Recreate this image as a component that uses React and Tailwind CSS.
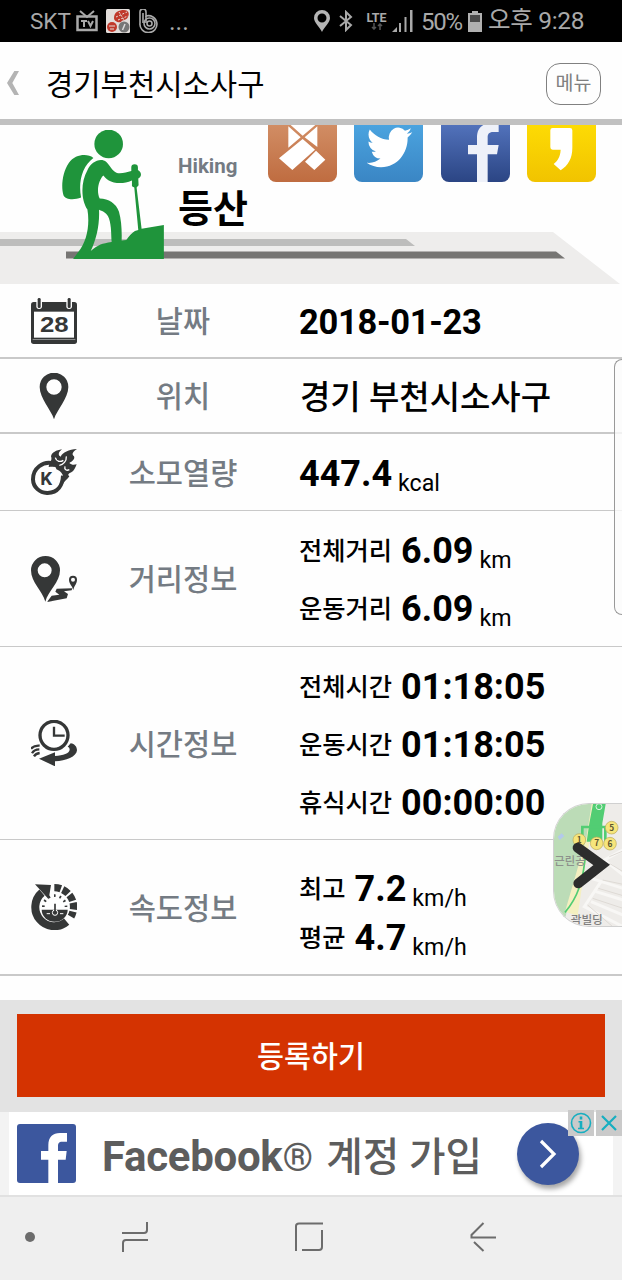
import React from 'react';

// Ikon-ikon di kolom kiri tabel
const CalendarIcon = () => (
  <svg viewBox="93 39 138 138" className="w-[46px] h-[46px]">
    <rect x="93" y="51" width="138" height="126" rx="8" fill="#353737" />
    <rect x="102" y="80" width="120" height="78" fill="#fff" />
    <rect x="98" y="162" width="128" height="3" fill="#8b8d8d" />
    <rect x="109" y="36" width="17" height="36" rx="8" fill="#fff" />
    <rect x="199" y="36" width="17" height="36" rx="8" fill="#fff" />
    <rect x="113" y="39" width="9" height="30" rx="4" fill="#353737" />
    <rect x="203" y="39" width="9" height="30" rx="4" fill="#353737" />
    <text
      x="120"
      y="141"
      fontSize="67"
      textLength="86"
      lengthAdjust="spacingAndGlyphs"
      fill="#353737"
      className="font-bold [font-family:'Liberation_Sans',sans-serif]"
    >
      28
    </text>
  </svg>
);

const PinIcon = () => (
  <svg viewBox="91 262 138 138" className="w-[46px] h-[46px]">
    <path
      fillRule="evenodd"
      fill="#353737"
      d="M160 401C153 375 117 338 117 304A43 43 0 0 1 203 304C203 338 167 375 160 401ZM160 281A23 23 0 1 0 160 327A23 23 0 1 0 160 281Z"
    />
  </svg>
);

const CalorieIcon = () => (
  <svg viewBox="93 492 138 138" className="w-[46px] h-[46px]">
    <path
      d="M154 534C130 530 99 548 99 583A43 42 0 0 0 143 624C174 623 188 600 189 572"
      fill="none"
      stroke="#353737"
      strokeWidth="12"
    />
    <path
      fill="#353737"
      d="M146 546C148 530 158 528 153 514C156 502 168 496 186 493C174 502 174 512 182 515C188 502 206 494 231 492C218 500 214 508 222 514C226 522 216 530 208 534C214 540 222 540 230 538C226 548 222 558 214 562C204 566 202 570 208 574C202 584 196 584 190 596C196 574 184 558 168 552C172 546 160 544 146 546Z"
    />
    <path
      d="M166 518C169 530 181 532 190 526M199 514C200 528 190 540 178 541M195 544C192 554 200 558 208 554"
      fill="none"
      stroke="#fff"
      strokeWidth="4"
    />
    <text x="121" y="600" fontSize="56" fill="#353737" className="font-bold [font-family:Roboto,sans-serif]">
      K
    </text>
  </svg>
);

const DistanceIcon = () => (
  <svg viewBox="93 45 138 138" className="w-[46px] h-[46px]">
    <g fill="#353737" fillRule="evenodd">
      <path d="M136 182C128 150 93 125 93 88A43.500 43 0 0 1 180 88C180 125 144 150 136 182ZM134 67A21 21 0 1 0 134 109A21 21 0 1 0 134 67Z" />
      <path d="M220 147C217 135 207 128 207 116A12 12 0 0 1 231 116C231 128 222 135 220 147ZM219 110A6 6 0 1 0 219 122A6 6 0 1 0 219 110Z" />
      <path d="M141 183L155 164L178 161L166 152L170 143L217 142L215 148L192 151L204 159L200 172Z" />
    </g>
  </svg>
);

const TimeIcon = () => (
  <svg viewBox="93 540 138 138" className="w-[46px] h-[46px]">
    <circle cx="162" cy="586" r="42" fill="none" stroke="#353737" strokeWidth="10" />
    <path d="M162 560V587H194" fill="none" stroke="#353737" strokeWidth="7" />
    <path
      fill="#353737"
      d="M212 610C224 612 231 620 231 631C230 650 198 663 165 664V679L117 656L165 637V648C190 646 208 640 209 629C209 624 207 621 203 620Z"
    />
    <path
      d="M119 617C108 616 98 620 93 626M118 628C108 628 100 632 96 640M119 639C112 640 106 642 102 649"
      fill="none"
      stroke="#353737"
      strokeWidth="7"
    />
  </svg>
);

const SpeedIcon = () => (
  <svg viewBox="93 101 138 138" className="w-[46px] h-[46px]">
    <path d="M126 127A57 57 0 0 0 200 214" fill="none" stroke="#353737" strokeWidth="24" />
    <path d="M105 102L153 104L146 147Z" fill="#353737" />
    <path
      d="M163 112A58 58 0 0 1 213 199"
      fill="none"
      stroke="#353737"
      strokeWidth="22"
      strokeDasharray="20 6"
    />
    <path d="M125 178H203A39 36 0 0 1 125 178Z" fill="#353737" />
    <path d="M130 170A34 34 0 0 1 198 170" fill="none" stroke="#353737" strokeWidth="8" strokeDasharray="5 12" />
    <circle cx="165" cy="187" r="8" fill="#353737" stroke="#fff" strokeWidth="3" />
    <path d="M165 160V190" stroke="#353737" strokeWidth="5" />
    <path d="M140 190H150M180 190H190" stroke="#fff" strokeWidth="3" />
  </svg>
);

const rows = [
  { label: '날짜', icon: CalendarIcon, height: 'h-[75px] border-b-2', values: [{ date: '2018-01-23' }] },
  { label: '위치', icon: PinIcon, height: 'h-[75px] border-b-2', values: [{ place: '경기 부천시소사구' }] },
  { label: '소모열량', icon: CalorieIcon, height: 'h-[77px] border-b', values: [{ value: '447.4', unit: 'kcal' }] },
  {
    label: '거리정보',
    icon: DistanceIcon,
    height: 'h-[136px] border-b',
    values: [
      { name: '전체거리', value: '6.09', unit: 'km' },
      { name: '운동거리', value: '6.09', unit: 'km' },
    ],
  },
  {
    label: '시간정보',
    icon: TimeIcon,
    height: 'h-[193px] border-b',
    values: [
      { name: '전체시간', value: '01:18:05' },
      { name: '운동시간', value: '01:18:05' },
      { name: '휴식시간', value: '00:00:00' },
    ],
  },
  {
    label: '속도정보',
    icon: SpeedIcon,
    height: 'h-[136px] border-b-2',
    tight: true,
    values: [
      { name: '최고', value: '7.2', unit: 'km/h' },
      { name: '평균', value: '4.7', unit: 'km/h' },
    ],
  },
];

const InfoRow = ({ row }) => {
  const Icon = row.icon;

  return (
    <div className={`grid grid-cols-[108px_150px_1fr] items-center border-[#c9c9c9] ${row.height}`}>
      <div className="flex justify-center">
        <Icon />
      </div>
      <div className="pt-[5px] text-center text-[29.5px] leading-none font-medium text-[#747b83]">{row.label}</div>
      <div className={`pl-[41px] ${row.tight ? 'pt-[13px]' : 'pt-[3px]'}`}>
        {row.values.map((item, i) => (
          <div
            key={i}
            className={`whitespace-nowrap text-[36px] font-bold text-black ${row.tight ? 'leading-[49px]' : 'leading-[58px]'}`}
          >
            {item.date && <span className="text-[34.5px] leading-none tracking-[-0.3px]">{item.date}</span>}
            {item.place && <span className="ml-px text-[33px] leading-none font-medium">{item.place}</span>}
            {item.name && (
              <span className="mr-[9px] align-[3px] text-[25.3px] leading-none font-medium">{item.name}</span>
            )}
            {item.value && <span className="leading-none">{item.value}</span>}
            {item.unit && (
              <span className="ml-[6px] align-[-5px] text-[23.2px] leading-none font-normal">{item.unit}</span>
            )}
          </div>
        ))}
      </div>
    </div>
  );
};

const StatusBar = () => (
  <div className="flex h-[42px] items-center bg-black pl-[30px] text-[#a9a9a9]">
    <span className="w-[46px] text-[22.5px] leading-none">SKT</span>
    <svg viewBox="0 0 22 22" className="w-[22px] h-[22px]">
      <path d="M4 1L11 7L18 1" fill="none" stroke="#a9a9a9" strokeWidth="2" />
      <rect x="1.500" y="6.500" width="19" height="13.500" fill="none" stroke="#a9a9a9" strokeWidth="2.500" />
      <path d="M5 11H11M8 11V17M12 11L14.500 16L17 11" fill="none" stroke="#a9a9a9" strokeWidth="2" />
    </svg>
    <svg viewBox="0 0 24 24" className="ml-2 w-6 h-6">
      <rect width="24" height="24" rx="1.500" fill="#e3dedb" />
      <path d="M8 9C8 3 13 1 18 1C22 1 24 4 22 8C20 12 17 10 15 13C12 14 8 12 8 9Z" fill="#c0392b" />
      <path d="M10 8L21 3M12 11L22 7M13 3L18 11" stroke="#e3dedb" strokeWidth="1" strokeDasharray="2 1.500" />
      <circle cx="6" cy="18" r="5" fill="#c0392b" />
      <path d="M3 17H9M4 20H8" stroke="#e3dedb" strokeWidth="1" />
      <circle cx="18" cy="18" r="5.500" fill="#777" />
      <path d="M16.500 21L19 15" stroke="#ddd" strokeWidth="1.500" />
    </svg>
    <svg viewBox="0 0 20 24" className="ml-[9px] w-5 h-6" fill="none" stroke="#a9a9a9" strokeWidth="1.600">
      <path d="M1 14V3A2.500 2.500 0 0 1 7 3V7A8.500 8.500 0 1 1 1 14Z" />
      <path d="M4 14V4M7 7V14" />
      <circle cx="10.500" cy="14.500" r="5.500" />
      <circle cx="10.500" cy="14.500" r="2.500" />
    </svg>
    <span className="ml-[10px] w-[20px] text-[25px] leading-none">...</span>

    <svg viewBox="0 0 16 22" className="ml-[125px] w-4 h-[22px]">
      <path
        fillRule="evenodd"
        fill="#b5b5b5"
        d="M8 22C6 17 0 13 0 8A8 8 0 0 1 16 8C16 13 10 17 8 22ZM8 3.500A4.500 4.500 0 1 0 8 12.500A4.500 4.500 0 1 0 8 3.500Z"
      />
    </svg>
    <svg viewBox="0 0 14 22" className="ml-[9px] w-[14px] h-[22px]" fill="none" stroke="#a9a9a9" strokeWidth="2">
      <path d="M1 6L12 15L7 20V2L12 7L1 16" />
    </svg>
    <div className="ml-3 w-[23px] text-center">
      <div className="text-[12.5px] leading-[11px] font-bold">LTE</div>
      <svg viewBox="0 0 12 7" className="mx-auto w-3 h-[7px]" fill="none" stroke="#555" strokeWidth="1.500">
        <path d="M3 0V6M1 4L3 6L5 4M9 7V1M7 3L9 1L11 3" />
      </svg>
    </div>
    <svg viewBox="0 0 21 22" className="ml-[4px] w-[21px] h-[22px]" fill="#a9a9a9">
      <path d="M0 22L5 17V22Z" />
      <rect x="7" y="13" width="2" height="9" />
      <rect x="12.500" y="7" width="2" height="15" />
      <rect x="18" y="0" width="2.500" height="22" />
    </svg>
    <span className="ml-[8px] w-[47px] pt-px text-[24px] leading-none tracking-[-1.3px]">50%</span>
    <svg viewBox="0 0 14 21" className="w-[14px] h-[21px]">
      <path d="M4 0H10V2H14V21H0V2H4Z" fill="#b0b0b0" />
      <rect x="2" y="4" width="10" height="7" fill="#4a4a4a" />
    </svg>
    <span className="ml-[6px] whitespace-nowrap pt-px text-[24.5px] leading-none tracking-[-0.3px]">오후 9:28</span>
  </div>
);

const Header = () => (
  <div className="flex h-[83px] items-center border-b-[6px] border-[#c1c1c1] pr-[21px] pl-[7px]">
    <svg viewBox="21 213 36 72" className="mt-1 w-3 h-6">
      <path d="M57 213H43L21 249L43 285H57L37 249Z" fill="#b4b4b4" />
    </svg>
    <h1 className="ml-[27px] flex-1 pt-[8px] text-[29.7px] leading-none font-normal text-black">경기부천시소사구</h1>
    <button className="mt-[6px] h-[42px] w-[55px] rounded-[14px] border border-[#808080] text-[19.5px] leading-none text-[#808080]">
      메뉴
    </button>
  </div>
);

const Hero = () => (
  <div className="relative h-[159px]">
    {/* Garis dekorasi di belakang judul */}
    <svg viewBox="0 0 622 52" className="absolute bottom-0 left-0 h-[52px] w-[622px]">
      <path d="M0 0H553L620 52H0Z" fill="#eeedec" />
      <path d="M0 7H406L415 14H0Z" fill="#bdbdbc" />
      <path d="M66 19.500H556L565 26.500H66Z" fill="#767573" />
    </svg>

    <div className="relative flex pl-[62px]">
      <svg viewBox="186 44 306 388" className="mt-[5px] h-[129px] w-[102px]" fill="#1f943b">
        <circle cx="326" cy="86" r="43" />
        <path d="M280 128C262 114 226 116 206 143C187 170 182 215 190 240C196 254 222 255 243 247C234 200 246 153 280 128Z" />
        <path
          fillRule="evenodd"
          d="M262 165C273 141 300 126 319 140C331 152 335 165 351 173C366 176 380 170 394 167V157A10 10 0 0 1 414 157V164C426 170 426 186 415 190L416 210L410 217L425 341L492 330V432H219L235 410C260 380 270 330 262 283C243 255 241 202 262 165ZM310 181C298 192 287 225 299 250C326 251 348 264 357 290C364 315 366 345 365 376L379 375C388 363 397 352 405 348L415 345L403 217L396 213V196C370 207 345 206 325 195C318 190 313 185 310 181ZM297 284C299 330 289 372 272 408C296 388 305 386 335 381C333 360 335 335 327 310C321 294 310 289 297 284Z"
        />
      </svg>
      <div className="ml-[14px] w-[90px] pt-[31px]">
        <div className="text-[20.5px] leading-5 font-bold text-[#747b83]">Hiking</div>
        <div className="mt-[14px] whitespace-nowrap text-[38px] leading-[38px] font-bold text-black">등산</div>
      </div>

      {/* Tombol share */}
      <div className="flex gap-[17.300px]">
        <div className="h-[57px] w-[69px] rounded-b-[8px] bg-linear-to-b from-[#d18d64] to-[#bf6c40]">
          <svg viewBox="0 0 207 171" className="h-[57px] w-[69px]" fill="#fff">
            <path d="M61 4V68L98 37ZM148 4V66L110 37ZM68 0H142L104 32Z" />
            <path d="M33 100L104 42L141 74L73 135ZM111 110L144 77L172 104L139 135Z" />
          </svg>
        </div>
        <div className="h-[57px] w-[69px] rounded-b-[8px] bg-linear-to-b from-[#4ba3df] to-[#3a86c4]">
          <svg viewBox="0 0 207 171" className="h-[57px] w-[69px]" fill="#fff">
            <path
              transform="translate(38 -6) scale(5.7 6.1)"
              d="M23.953 4.57a10 10 0 01-2.825.775 4.958 4.958 0 002.163-2.723c-.951.555-2.005.959-3.127 1.184a4.92 4.92 0 00-8.384 4.482C7.69 8.095 4.067 6.13 1.64 3.162a4.822 4.822 0 00-.666 2.475c0 1.71.87 3.213 2.188 4.096a4.904 4.904 0 01-2.228-.616v.06a4.923 4.923 0 003.946 4.827 4.996 4.996 0 01-2.212.085 4.936 4.936 0 004.604 3.417 9.867 9.867 0 01-6.102 2.105c-.39 0-.779-.023-1.17-.067a13.995 13.995 0 007.557 2.209c9.053 0 13.998-7.496 13.998-13.985 0-.21 0-.42-.015-.63A9.935 9.935 0 0024 4.59z"
            />
          </svg>
        </div>
        <div className="h-[57px] w-[69px] rounded-b-[8px] bg-linear-to-b from-[#5272bb] to-[#2b4584]">
          <svg viewBox="0 0 207 171" className="h-[57px] w-[69px]" fill="#eef1f9">
            <path d="M108 171V88H81V60H108V38C108 8 125 -5 150 -5H173V21H157C143 21 140 28 140 38V60H173L168 88H140V171Z" />
          </svg>
        </div>
        <div className="h-[57px] w-[69px] rounded-b-[8px] bg-linear-to-b from-[#fddb04] to-[#f1c300]">
          <svg viewBox="0 0 207 171" className="h-[57px] w-[69px]" fill="#fff">
            <path d="M70 16Q70 9 77 9H129Q136 9 136 16V68C136 100 124 120 101 136L80 117C92 107 100 95 101 74H77Q70 74 70 67Z" />
          </svg>
        </div>
      </div>
    </div>
  </div>
);

// Potongan peta yang menempel di sisi kanan layar
const MapHandle = () => (
  <div className="absolute top-[803px] right-0 h-[124px] w-[69px] overflow-hidden rounded-l-[36px] border border-r-0 border-[#d0d0d0]">
    <svg viewBox="39 37 207 372" className="h-[124px] w-[69px] [font-family:'Noto_Sans_CJK_KR',sans-serif]">
      <rect x="39" y="37" width="207" height="372" fill="#eeece9" />
      <path d="M39 37H158L140 140L80 350L65 409H39Z" fill="#bcdcb7" />
      <path d="M152 37L136 140L72 360L110 372L128 250L165 37Z" fill="#f4efc0" />
      <path d="M50 135l12-10l8 8l-14 12z" fill="#b3c9ec" />
      <g fill="none" stroke="#f8f7f5" strokeWidth="9">
        <path d="M246 175L190 205L246 250M180 270L130 345L246 405M150 260L246 290M165 300L246 325M150 330L246 370" />
      </g>
      <g fill="none" stroke="#dedad5" strokeWidth="3">
        <path d="M185 265L246 278M172 290L246 312M155 320L246 350M140 340L215 405M205 195L246 178M205 215L246 240" />
      </g>
      <path d="M156 37H194L184 95V150H137L145 95Z" fill="#52cd73" />
      <path d="M124 145V106H193V150" fill="none" stroke="#52cd73" strokeWidth="8" />
      <path d="M134 180C128 270 108 320 72 362" fill="none" stroke="#52cd73" strokeWidth="5" />
      <circle cx="174" cy="45" r="9" fill="none" stroke="#d9f5df" strokeWidth="3" />
      <g fill="#f6e57c" stroke="#b9a95a" strokeWidth="2">
        <circle cx="212" cy="108" r="19" />
        <circle cx="115" cy="145" r="19" />
        <circle cx="167" cy="155" r="19" />
        <circle cx="207" cy="156" r="19" />
      </g>
      <g fill="#5c5530" fontSize="25" fontWeight="700" textAnchor="middle">
        <text x="212" y="117">5</text>
        <text x="115" y="154">1</text>
        <text x="167" y="164">7</text>
        <text x="207" y="165">6</text>
      </g>
      <text x="40" y="219" fontSize="34" fontWeight="500" fill="#8d918c">근린공</text>
      <text x="89" y="397" fontSize="35" fontWeight="500" fill="#7f7f7f">곽빌딩</text>
      <path
        d="M110 168L182 220L112 275"
        fill="none"
        stroke="#2d2d2d"
        strokeWidth="30"
        strokeLinecap="round"
        strokeLinejoin="miter"
      />
    </svg>
  </div>
);

const AdBanner = () => (
  <div className="relative flex h-[83px] items-center border-x-[9px] border-[#f3f3f3] bg-white pl-2">
    <svg viewBox="51 87 177 177" className="h-[59px] w-[59px]">
      <rect x="51" y="87" width="177" height="177" rx="9" fill="#3c579e" />
      <path d="M145 264V194H123V168H145V150C145 126 158 114 180 114H201V140H187C176 140 174 146 174 153V168H200L197 194H174V264Z" fill="#fff" />
    </svg>
    <div className="ml-[26px] w-[415px] whitespace-nowrap pt-[6px] text-[42px] leading-none font-bold text-[#5d5d5d]">
      <span className="tracking-[-0.3px]">Facebook</span>
      <span className="text-[39px] font-normal">®</span>
      <span className="ml-[13px] text-[39.7px] font-medium">계정 가입</span>
    </div>
    <div className="flex h-[62px] w-[62px] items-center justify-center rounded-full bg-[#3c579e] shadow-[2px_4px_5px_rgba(0,0,0,0.35)]">
      <svg viewBox="0 0 18 30" className="h-[30px] w-[18px]" fill="none" stroke="#fff" strokeWidth="3.200">
        <path d="M2 2L15 15L2 28" />
      </svg>
    </div>
    <div className="absolute -top-[2px] -right-[9px] flex gap-[2px]">
      <div className="flex h-[26px] w-[26px] items-center justify-center bg-[#cacaca]">
        <svg viewBox="0 0 22 22" className="h-[22px] w-[22px]" fill="none" stroke="#17aec0" strokeWidth="1.600">
          <circle cx="11" cy="11" r="9.500" />
          <path d="M11 4.500V7.500M11 9V17" strokeWidth="2.600" />
          <path d="M8.500 9.800H11M8 16.500H14" />
        </svg>
      </div>
      <div className="flex h-[26px] w-[26px] items-center justify-center bg-[#cacaca]">
        <svg viewBox="0 0 16 16" className="h-4 w-4" fill="none" stroke="#17aec0" strokeWidth="2.200">
          <path d="M1 1L15 15M15 1L1 15" />
        </svg>
      </div>
    </div>
  </div>
);

const NavBar = () => (
  <div className="flex h-[85px] items-center border-t-2 border-[#e1e1e1] bg-[#efefef] pb-[3px] pl-[25px]">
    <div className="h-[10px] w-[10px] rounded-full bg-[#6c6c6c]" />
    <svg viewBox="0 0 26 30" className="ml-[87px] h-[30px] w-[26px]" fill="none" stroke="#6c6c6c" strokeWidth="2">
      <path d="M0 11H22Q25 11 25 8V0M26 18H4Q1 18 1 21V30" />
    </svg>
    <svg viewBox="0 0 28 30" className="ml-[147px] h-[30px] w-7" fill="none" stroke="#6c6c6c" strokeWidth="2">
      <path d="M1 29V4Q1 1.500 4 1.500H28M27 8V25Q27 28 24 28H7" />
    </svg>
    <svg viewBox="0 0 26 30" className="ml-[147px] h-[30px] w-[26px]" fill="none" stroke="#6c6c6c" strokeWidth="2">
      <path d="M13.500 1L1.500 13V15.500H26M4 20L13.500 29" />
    </svg>
  </div>
);

const App = () => {
  return (
    <div
      lang="ko"
      className="relative flex h-[1280px] w-[622px] flex-col overflow-hidden bg-[#fefefe] [font-family:Roboto,'Noto_Sans_CJK_KR',sans-serif]"
    >
      <StatusBar />
      <Header />
      <Hero />

      {/* Tabel informasi */}
      <div className="h-[716px]">
        {rows.map((row) => (
          <InfoRow key={row.label} row={row} />
        ))}
      </div>

      <div className="h-[112px] bg-[#e3e3e3] px-[17px] pt-[14px]">
        <button className="h-[83px] w-full bg-[#d43301] pt-[5px] text-[29.3px] leading-none font-medium text-white">
          등록하기
        </button>
      </div>

      <AdBanner />
      <NavBar />

      {/* Panel tepi */}
      <div className="absolute top-[359px] right-0 h-[256px] w-2 rounded-l-[10px] border border-r-0 border-[#999] bg-[#fbfbfb]/80" />
      <MapHandle />
    </div>
  );
};

export default App;
